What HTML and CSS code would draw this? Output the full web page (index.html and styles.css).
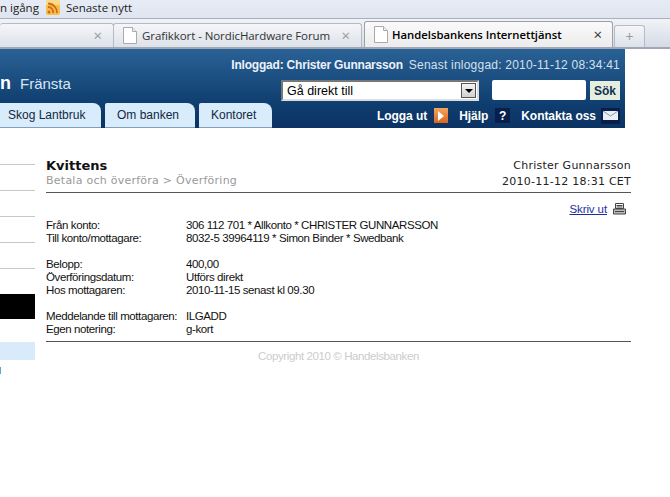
FILE: index.html
```html
<!DOCTYPE html>
<html lang="sv">
<head>
<meta charset="utf-8">
<title>Handelsbankens Internettjänst</title>
<link rel="stylesheet" href="styles.css">
</head>
<body>
<div class="bookmarks">
  <span class="bm-text">n igång</span>
  <svg class="rss" width="15" height="15" viewBox="0 0 15 15"><rect x="1" width="14" height="15" rx="2" fill="#f3c04a"/><rect x="1" y="0" width="14" height="5" fill="#f8dc8c"/><circle cx="4" cy="12" r="1.5" fill="#d9661a"/><path d="M3 7a5 5 0 0 1 5 6M3 3.500a9 9 0 0 1 9 9.500" stroke="#d9661a" stroke-width="1.800" fill="none"/></svg>
  <span class="bm-text">Senaste nytt</span>
</div>
<div class="tabstrip">
  <div class="tab tab-first"><span class="close close-dim">×</span></div>
  <div class="tab tab-second">
    <svg class="doc" width="14" height="17" viewBox="0 0 14 17"><path d="M.5.500h9l4 4v12H.5z" fill="#fff" stroke="#aaa"/><path d="M9.500.500v4h4" fill="#eee" stroke="#aaa"/></svg>
    <span class="tab-title">Grafikkort - NordicHardware Forum</span>
    <span class="close close-dim">×</span>
  </div>
  <div class="tab tab-active">
    <svg class="doc" width="14" height="17" viewBox="0 0 14 17"><path d="M.5.500h9l4 4v12H.5z" fill="#fff" stroke="#aaa"/><path d="M9.500.500v4h4" fill="#eee" stroke="#aaa"/></svg>
    <span class="tab-title tab-title-active">Handelsbankens Internettjänst</span>
    <span class="close">×</span>
  </div>
  <div class="tab tab-new"><span class="plus">+</span></div>
</div>
<header class="bank">
  <div class="login"><b>Inloggad: Christer Gunnarsson</b><span class="login-last">Senast inloggad: 2010-11-12 08:34:41</span></div>
  <div class="bank-mid">
    <div class="brand"><b class="brand-n">n</b><span class="brand-place">Fränsta</span></div>
    <div class="searchrow">
      <div class="select"><span class="select-text">Gå direkt till</span><span class="select-btn"><i class="arrow"></i></span></div>
      <div class="search"></div>
      <div class="sok">Sök</div>
    </div>
  </div>
  <div class="bank-bottom">
    <nav class="navtabs">
      <span class="navtab nt1">Skog Lantbruk</span>
      <span class="navtab nt2">Om banken</span>
      <span class="navtab nt3">Kontoret</span>
    </nav>
    <div class="links">
      <b>Logga ut</b>
      <span class="ico ico-orange"><i class="tri"></i></span>
      <b class="link-next">Hjälp</b>
      <span class="ico ico-navy">?</span>
      <b class="link-next">Kontakta oss</b>
      <span class="ico ico-mail"><svg width="15" height="9" viewBox="0 0 15 9"><path d="M0 0h15v9H0z" fill="#e9eef5"/><path d="M0 0l7.500 5L15 0" fill="none" stroke="#8796b0"/></svg></span>
    </div>
  </div>
</header>
<div class="page">
  <aside class="side">
    <div class="side-line"></div>
    <div class="side-line"></div>
    <div class="side-line"></div>
    <div class="side-line"></div>
    <div class="side-line"></div>
    <div class="side-black"></div>
    <div class="side-blue"></div>
    <div class="side-tick"></div>
  </aside>
  <main class="main">
    <div class="head">
      <div>
        <h1 class="title">Kvittens</h1>
        <div class="crumb">Betala och överföra &gt; Överföring</div>
      </div>
      <div class="who">
        <div>Christer Gunnarsson</div>
        <div>2010-11-12 18:31 CET</div>
      </div>
    </div>
    <div class="print"><a class="print-link" href="#">Skriv ut</a>
      <svg class="printer" width="13" height="12" viewBox="0 0 13 12"><path d="M2.500.500h8v5h-8zM3.500 2.500h6M3.500 4h6" fill="#fff" stroke="#444"/><path d="M.5 6h12v5H.5z" fill="#bbb" stroke="#444"/><path d="M2 8.500h9" stroke="#444"/></svg>
    </div>
    <div class="details">
      <div class="row"><span>Från konto:</span><span>306 112 701 * Allkonto * CHRISTER GUNNARSSON</span></div>
      <div class="row gap-after"><span>Till konto/mottagare:</span><span>8032-5 39964119 * Simon Binder * Swedbank</span></div>
      <div class="row"><span>Belopp:</span><span>400,00</span></div>
      <div class="row"><span>Överföringsdatum:</span><span>Utförs direkt</span></div>
      <div class="row gap-after"><span>Hos mottagaren:</span><span>2010-11-15 senast kl 09.30</span></div>
      <div class="row"><span>Meddelande till mottagaren:</span><span>ILGADD</span></div>
      <div class="row"><span>Egen notering:</span><span>g-kort</span></div>
    </div>
    <footer class="copy">Copyright 2010 © Handelsbanken</footer>
  </main>
</div>
</body>
</html>
```
FILE: styles.css
```css
html, body { margin: 0; padding: 0; background: #fff; overflow: hidden; }
body { width: 670px; height: 497px; font-family: "Liberation Sans", Arial, sans-serif; font-size: 12px; color: #000; }

.bookmarks { height: 19px; box-sizing: border-box; border-bottom: 1px solid #a9b0ba; background: linear-gradient(#e6ebf5, #dfe5f0); display: flex; align-items: center; padding-bottom: 3px; font-family: "Open Sans", sans-serif; font-size: 11.500px; color: #222; }
.rss { margin: 0 6px; }

.tabstrip { height: 30px; box-sizing: border-box; border-bottom: 2px solid #9ea7b3; background: linear-gradient(#f1f3f8, #d5dae4); display: flex; align-items: flex-end; font-family: "Open Sans", sans-serif; font-size: 11.500px; }
.tab { height: 24px; box-sizing: border-box; display: flex; align-items: center; border: 1px solid #b5bbc6; border-bottom: 0; border-radius: 3px 3px 0 0; background: linear-gradient(#f4f6f9, #dde1e9); }
.tab-first { width: 114px; border-left: 0; justify-content: flex-end; padding-right: 11px; }
.tab-second { width: 249px; padding: 0 11px 0 9px; margin-left: -1px; }
.tab-active { width: 249px; height: 26px; padding: 0 10px 0 9px; margin-left: 2px; background: linear-gradient(#fafafa, #ececec); border-color: #9aa1ac; }
.tab-new { width: 31px; height: 22px; margin-left: 1px; justify-content: center; }
.doc { margin-right: 5px; flex: none; }
.tab-title { flex: 1; white-space: nowrap; overflow: hidden; color: #333; letter-spacing: -.08px; }
.tab-title-active { color: #000; font-weight: 600; font-size: 11.300px; letter-spacing: 0; margin-left: -1px; }
.close { font-size: 15px; line-height: 1; color: #333; }
.close-dim { color: #999; }
.plus { color: #999; font-size: 14px; }

.bank { width: 625px; height: 79px; background: linear-gradient(#2a6295, #0f3d6f 70%, #0b3363); display: flex; flex-direction: column; color: #fff; }
.login { height: 31px; display: flex; justify-content: flex-end; align-items: center; gap: 6px; padding-right: 5px; color: #d4e0ec; white-space: nowrap; }
.login b { color: #edf2f8; letter-spacing: -.2px; }
.login-last { letter-spacing: .22px; }
.bank-mid { height: 23px; display: flex; justify-content: space-between; align-items: flex-start; padding-right: 5px; }
.bank-bottom { height: 25px; display: flex; justify-content: space-between; padding-right: 5px; }

.brand { display: flex; align-items: baseline; font-size: 15px; color: #dbe6f2; line-height: 18px; margin-top: -6px; }
.brand-n { font-size: 18px; color: #fff; margin-right: 9px; }

.navtabs { display: flex; gap: 4px; }
.navtab { height: 25px; box-sizing: border-box; background: #d9ecfb; color: #12283f; border-radius: 0 8px 0 0; border-bottom: 1px solid #7f9fbd; display: flex; align-items: center; font-size: 12px; }
.nt1 { width: 101px; padding-left: 8px; }
.nt2 { width: 90px; padding-left: 12px; border-top-left-radius: 2px; }
.nt3 { width: 73px; padding-left: 12px; border-top-left-radius: 2px; }

.searchrow { display: flex; align-items: flex-start; height: 21px; }
.select { width: 198px; height: 21px; box-sizing: border-box; background: #fff; border: 2px solid; border-color: #777 #ddd #ddd #777; display: flex; align-items: center; justify-content: space-between; color: #000; padding-left: 4px; }
.select-text { font-size: 12.500px; }
.select-btn { width: 15px; height: 15px; box-sizing: border-box; border: 1px solid #555; background: linear-gradient(#f4f4f4, #d0d0d0); display: flex; align-items: center; justify-content: center; margin-right: 1px; }
.arrow { border: 4px solid transparent; border-top: 4px solid #000; border-bottom: 0; }
.search { width: 94px; height: 20px; background: #fff; border-radius: 2px; margin-left: 13px; }
.sok { width: 30px; height: 19px; background: #e6eedf; color: #12304f; font-weight: 700; display: flex; align-items: center; justify-content: center; margin-left: 4px; margin-top: 1px; }

.links { display: flex; align-items: center; gap: 7px; height: 25px; color: #fff; white-space: nowrap; letter-spacing: -.05px; }
.link-next { margin-left: 4px; }
.ico { width: 14px; height: 15px; display: flex; align-items: center; justify-content: center; flex: none; }
.ico-orange { background: linear-gradient(#f3a55f, #d9651d); }
.tri { border: 5px solid transparent; border-left: 6px solid #fff; border-right: 0; }
.ico-navy { background: #0a1e4e; width: 15px; font-weight: 700; }
.ico-mail { background: #0a1e4e; width: 19px; height: 16px; margin-left: -2px; }

.page { display: flex; }
.side { width: 35px; flex: none; padding-top: 36px; }
.side-line { height: 1px; background: #c8c8c8; margin-bottom: 25px; }
.side-black { height: 25px; background: #000; }
.side-blue { height: 18px; margin-top: 23px; background: #d9eafb; }
.side-tick { width: 1px; height: 7px; margin-top: 7px; background: #58a8e8; }

.main { width: 585px; margin-left: 11px; font-family: "DejaVu Sans", Verdana, sans-serif; }
.head { display: flex; justify-content: space-between; padding-top: 30px; height: 34px; border-bottom: 1px solid #555; font-size: 11px; }
.title { margin: 0; font-size: 13px; font-weight: 700; line-height: 15px; color: #111; }
.crumb { color: #999; line-height: 16px; font-size: 11px; letter-spacing: .25px; }
.who { text-align: right; line-height: 16px; color: #222; letter-spacing: .25px; }
.print { height: 26px; box-sizing: border-box; padding: 5px 5px 0 0; display: flex; justify-content: flex-end; align-items: center; gap: 6px; font-family: "Liberation Sans", sans-serif; font-size: 11.500px; letter-spacing: -.1px; }
.print-link { color: #1a2f9c; }
.details { font-family: "Liberation Sans", sans-serif; font-size: 11.500px; letter-spacing: -.4px; line-height: 13px; padding-bottom: 5px; border-bottom: 1px solid #555; color: #111; }
.row { display: grid; grid-template-columns: 140px 1fr; }
.gap-after { margin-bottom: 13px; }
.copy { text-align: center; color: #ccc; font-family: "Liberation Sans", sans-serif; font-size: 11.500px; letter-spacing: -.4px; margin-top: 8px; }
```
